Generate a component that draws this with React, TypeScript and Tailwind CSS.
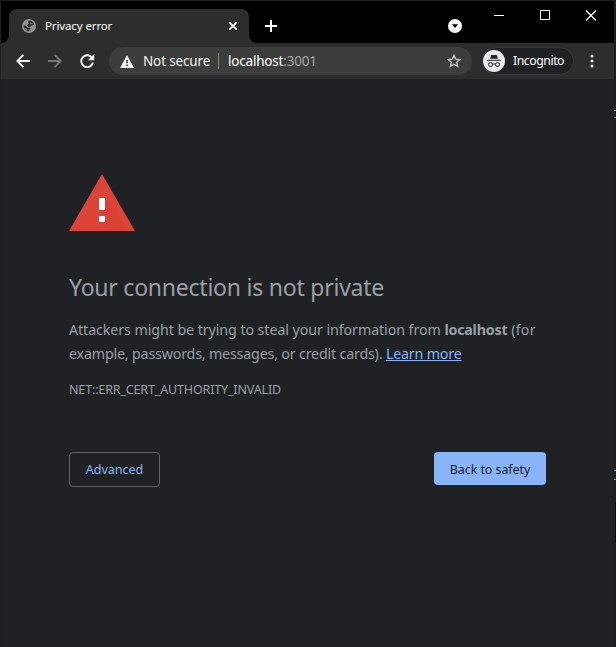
import React from "react";

function TabStrip() {
  return (
    <div className="relative flex h-[43px] bg-black pl-[9px]">
      <div className="absolute bottom-0 left-px h-2 w-2 bg-[#2d2d2d]">
        <div className="h-full w-full rounded-br-lg bg-black" />
      </div>
      <div className="mt-[9px] flex h-[34px] w-[240px] items-center rounded-t-lg bg-[#2d2d2d] pl-[13px] pr-[11px] text-white">
        <svg width="14" height="14" viewBox="0 0 14 14">
          <circle cx="7" cy="7" r="7" fill="#919191" />
          <path
            d="M6.6 1.8H8.8C10.4 2.3 11.6 3.4 12.2 5L10.8 6.6H9.4L8.6 7.8H6.4L5.4 6.8V5.6L7 4.8 6 3.6Z"
            fill="#2d2d2d"
          />
          <path d="M1.6 6.6 4 7 5.4 8.4H7.4L8.4 9.6 7.6 10.8 6.6 12.4C4 12.2 1.8 10 1.6 6.6Z" fill="#2d2d2d" />
          <path d="M8.4 3.2 10 4.4 8.8 5.4 8 4.6ZM2.6 9 4.6 9.6 5.4 11.4 3.8 11.2Z" fill="#919191" />
        </svg>
        <span className="ml-[9px] whitespace-nowrap text-[11.5px] leading-4 tracking-[-0.12px]">Privacy error</span>
        <svg className="ml-auto" width="10" height="10" viewBox="0 0 10 10" fill="none" stroke="#f1f1f1" strokeWidth="1.8">
          <path d="m1.3 1.3 7.4 7.4M8.7 1.3 1.3 8.7" />
        </svg>
      </div>
      <div className="mt-[35px] h-2 w-2 bg-[#2d2d2d]">
        <div className="h-full w-full rounded-bl-lg bg-black" />
      </div>
      <svg className="ml-[8px] mt-[20px]" width="12" height="12" viewBox="0 0 12 12" stroke="#fff" strokeWidth="2">
        <path d="M0 6h12M6 0v12" />
      </svg>
      <svg className="ml-[171px] mt-[19px]" width="14" height="14" viewBox="0 0 14 14">
        <circle cx="7" cy="7" r="7" fill="#fff" />
        <path d="M3.9 5.3h6.2L7 9.1Z" fill="#000" />
      </svg>
      <svg className="ml-[31px] mt-[10px]" width="104" height="11" viewBox="0 0 104 11" fill="none" stroke="#fff">
        <path d="M1 5.5h10" />
        <path d="M47.5.5h9v9h-9z" />
        <path d="m93 .5 10 10m0-10-10 10" strokeWidth="1.2" />
      </svg>
    </div>
  );
}

function IncognitoIcon() {
  return (
    <svg width="22" height="22" viewBox="0 0 22 22">
      <circle cx="11" cy="11" r="11" fill="#e8eaed" />
      <path d="M7.1 8.8 8.2 5.2c.1-.4.4-.6.8-.5l2 .5 2-.5c.4-.1.7.1.8.5l1.1 3.6Z" fill="#202124" />
      <path d="M4.4 10.3h13.4" stroke="#202124" strokeWidth="1" />
      <g fill="none" stroke="#202124" strokeWidth="1">
        <circle cx="7.5" cy="14.5" r="2" />
        <circle cx="14.5" cy="14.5" r="2" />
        <path d="M9.5 14.3q1.5-.8 3 0" />
      </g>
    </svg>
  );
}

function Toolbar() {
  return (
    <div className="flex h-9 items-center bg-[#2d2d2d] pl-4">
      <svg width="14" height="14" viewBox="0 0 14 14" fill="none" stroke="#f1f1f1" strokeWidth="1.9">
        <path d="M14 7H1.4M7.4.8 1.3 7l6.1 6.2" />
      </svg>
      <svg className="ml-[18px]" width="14" height="14" viewBox="0 0 14 14" fill="none" stroke="#777" strokeWidth="1.9">
        <path d="M0 7h12.6M6.6.8 12.7 7l-6.1 6.2" />
      </svg>
      <svg className="ml-[18px]" width="15" height="14" viewBox="0 0 15 14">
        <path d="M12.2 4.1A5.9 5.9 0 1 0 12.9 8.6" fill="none" stroke="#f1f1f1" strokeWidth="1.9" />
        <path d="M14.2 0v6.2H8Z" fill="#f1f1f1" />
      </svg>
      <div className="ml-[14px] flex h-7 w-[363px] items-center rounded-full bg-[#3d3d3d] pl-[11px] pr-[11px] text-[13.5px] leading-5">
        <svg width="14" height="13" viewBox="0 0 14 13">
          <path d="M7 0 14 13H0Z" fill="#f1f1f1" />
          <path d="M6.3 5h1.5v3.3H6.3zM6.3 9.5h1.5V11H6.3z" fill="#3d3d3d" />
        </svg>
        <span className="ml-[9px] w-[67px] whitespace-nowrap tracking-[-0.15px] text-[#f1f1f1]">Not secure</span>
        <span className="ml-[8px] h-4 w-px bg-[#858585]" />
        <span className="ml-[9px] whitespace-nowrap tracking-[-0.2px] text-[#a5a5a5]">
          <span className="text-white">localhost</span>:3001
        </span>
        <svg className="ml-auto" width="14" height="14" viewBox="0 0 14 14" fill="none" stroke="#c4c4c4" strokeWidth="1.4">
          <path d="m7 1.3 1.65 3.85 4.2.4-3.2 2.75.95 4.1L7 10.25 3.4 12.4l.95-4.1-3.2-2.75 4.2-.4Z" />
        </svg>
      </div>
      <div className="ml-[10px] flex h-7 w-[92px] items-center rounded-full border border-[#363739] bg-[#202124] text-[12.25px] leading-5 text-white">
        <IncognitoIcon />
        <span className="ml-2 whitespace-nowrap tracking-[-0.45px]">Incognito</span>
      </div>
      <svg className="ml-4" width="4" height="14" viewBox="0 0 4 14" fill="#e8eaed">
        <circle cx="2" cy="2" r="1.5" />
        <circle cx="2" cy="7" r="1.5" />
        <circle cx="2" cy="12" r="1.5" />
      </svg>
    </div>
  );
}

function WarningTriangle() {
  return (
    <svg width="66" height="57" viewBox="0 0 66 57">
      <path d="M33 0 66 57H0Z" fill="#db4437" />
      <path d="M36 24 45 33 57 54V57H39L30 48h6v-6l-6-6h6Z" fill="#c13c31" opacity=".2" />
      <path d="M30 24h6v12h-6zM30 42h6v6h-6z" fill="#fff" />
    </svg>
  );
}

export default function App() {
  return (
    <div className="relative flex h-[647px] w-[616px] flex-col overflow-hidden bg-[#202124] font-['Noto_Sans','Liberation_Sans',sans-serif]">
      <TabStrip />
      <Toolbar />
      <main className="flex flex-col items-start pl-[69px] pr-[70px] pt-[95px] text-[#9aa0a6]">
        <WarningTriangle />
        <h1 className="mt-[40px] whitespace-nowrap text-[23px] leading-8 tracking-[-0.23px]">Your connection is not private</h1>
        <p className="mt-[15px] whitespace-nowrap text-[14.25px] leading-6 tracking-[-0.18px]">
          <span className="tracking-[-0.08px]">Attackers might be trying to steal your information from </span>
          <b className="tracking-[-0.2px]">localhost</b>
          <span className="tracking-[0.2px]"> (for</span>
          <br />
          example, passwords, messages, or credit cards).{" "}
          <a href="#" className="text-[#8ab4f8] underline">Learn more</a>
        </p>
        <div className="mt-[15px] whitespace-nowrap text-[12.5px] leading-[18px] tracking-[-0.15px]">NET::ERR_CERT_AUTHORITY_INVALID</div>
        <div className="mt-[53px] flex w-full items-start justify-between text-[12.5px]">
          <button className="h-[35px] w-[91px] whitespace-nowrap rounded-[4px] border border-[#5f6368] pt-[2px] text-[#8ab4f8]">Advanced</button>
          <button className="h-[33px] w-[112px] whitespace-nowrap rounded-[4px] bg-[#8ab4f8] pt-[3px] tracking-[-0.08px] text-[#202124]">Back to safety</button>
        </div>
      </main>
      <div className="pointer-events-none absolute inset-0 border-l border-t border-[#202020]" />
      <div className="absolute right-0 top-0 h-full w-[2px] bg-[#1e1e1e]" />
      <div className="absolute right-0 top-[110px] flex h-2 w-[2px] flex-col justify-between">
        <span className="h-px bg-[#999]" />
        <span className="h-px bg-[#777]" />
      </div>
      <div className="absolute right-0 top-[470px] flex h-[10px] w-[2px] flex-col justify-between">
        <span className="h-px bg-[#6684aa]" />
        <span className="h-px bg-[#6684aa]" />
      </div>
      <div className="absolute right-0 top-[502px] h-10 w-px bg-[#0c0c0c]" />
    </div>
  );
}
